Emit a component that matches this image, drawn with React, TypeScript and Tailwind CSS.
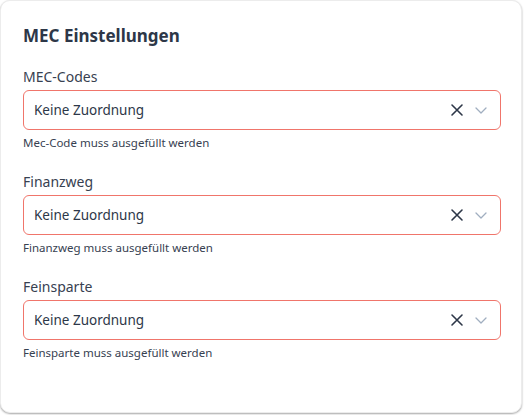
import React from "react";

function Field({ label, error }: { label: string; error: string }) {
  return (
    <div className="flex flex-col">
      <div className="text-[14px] leading-[20px] text-[#374151] mb-[3px]">{label}</div>
      <div className="h-[40px] rounded-[6px] border border-[#f0756b] flex items-center pl-[10px] pr-[12px]">
        <span className="flex-1 text-[13.5px] text-[#2d3748]">Keine Zuordnung</span>
        <svg width="14" height="14" viewBox="0 0 14 14" className="mr-[10px]">
          <path d="M2 2L12 12M12 2L2 12" stroke="#2d3748" strokeWidth="1.6" strokeLinecap="round" />
        </svg>
        <svg width="14" height="14" viewBox="0 0 14 14">
          <path d="M2 5L7 10L12 5" stroke="#a0aec0" strokeWidth="1.3" fill="none" strokeLinecap="round" strokeLinejoin="round" />
        </svg>
      </div>
      <div className="text-[11.5px] leading-[16px] text-[#374151] mt-[5px]">{error}</div>
    </div>
  );
}

export default function App() {
  return (
    <div className="w-[524px] h-[415px] bg-white p-0" style={{ fontFamily: '"Noto Sans", sans-serif' }}>
      <div className="w-[522px] h-[413px] bg-white rounded-[10px] border border-[#ececec] shadow-[0_1px_2px_rgba(0,0,0,0.35)] pl-[22px] pr-[20px] pt-[24px]">
        <h2 className="text-[17px] leading-[22px] font-bold text-[#2d3748] mb-[20px]">MEC Einstellungen</h2>
        <div className="flex flex-col gap-[21px]">
          <Field label="MEC-Codes" error="Mec-Code muss ausgefüllt werden" />
          <Field label="Finanzweg" error="Finanzweg muss ausgefüllt werden" />
          <Field label="Feinsparte" error="Feinsparte muss ausgefüllt werden" />
        </div>
      </div>
    </div>
  );
}
